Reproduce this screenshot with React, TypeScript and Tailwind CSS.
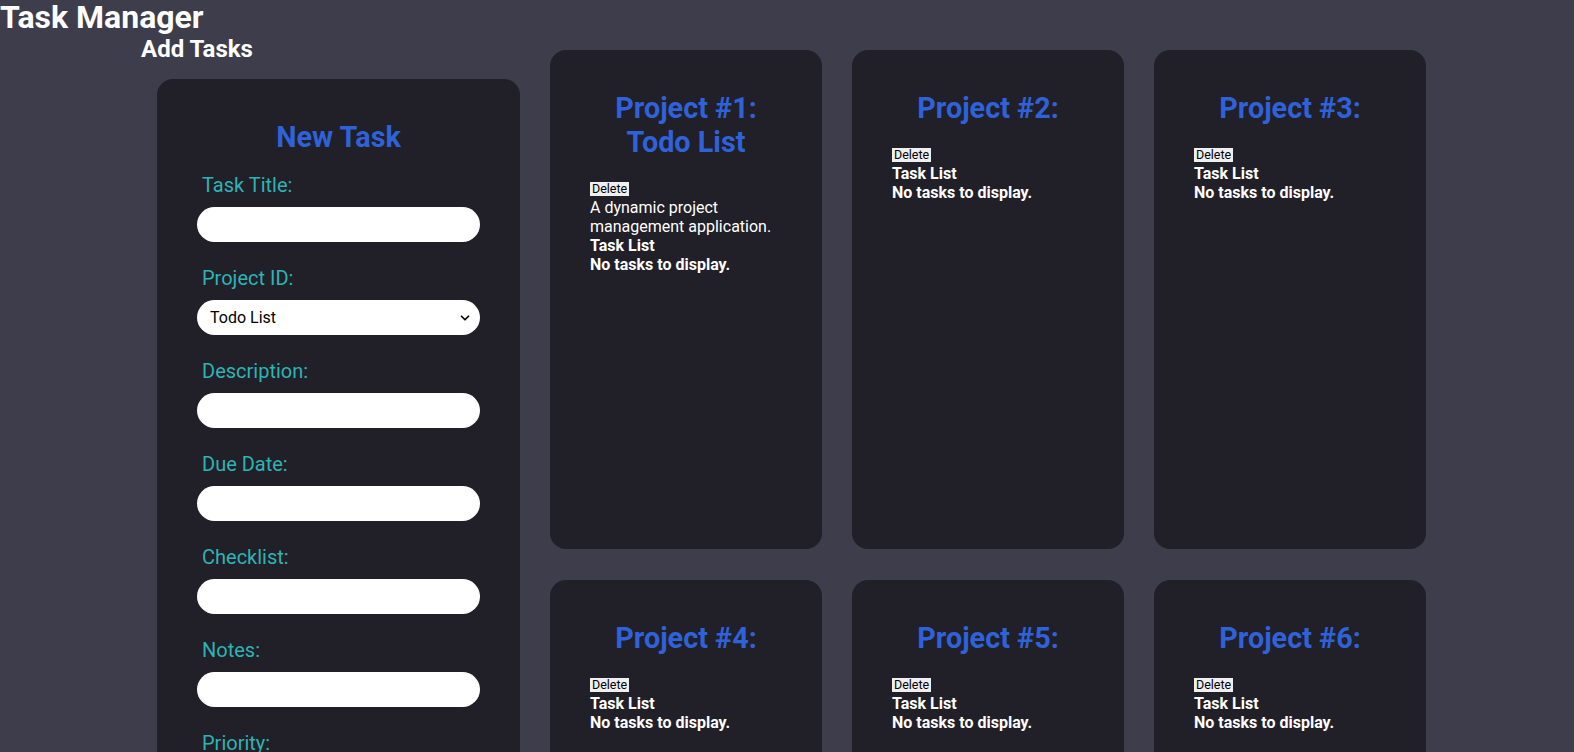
import { ChevronDown } from 'lucide-react'

const projects = [
  { id: 1, title: 'Todo List', description: 'A dynamic project management application.' },
  { id: 2, title: '', description: '' },
  { id: 3, title: '', description: '' },
  { id: 4, title: '', description: '' },
  { id: 5, title: '', description: '' },
  { id: 6, title: '', description: '' },
]

const fields = ['Task Title:', 'Project ID:', 'Description:', 'Due Date:', 'Checklist:', 'Notes:', 'Priority:']

function Field({ label }: { label: string }) {
  return (
    <div className="mb-[25px]">
      <label className="block pl-[5px] text-[20px] leading-[22px] text-[#2cb4b6]">{label}</label>
      {label === 'Project ID:' ? (
        <div className="relative mt-[11px] h-[35px] w-full rounded-full bg-white">
          <select className="h-full w-full appearance-none rounded-full bg-transparent pl-[13px] text-[16px] text-black outline-none">
            <option>Todo List</option>
          </select>
          <ChevronDown className="pointer-events-none absolute right-[8px] top-[11px] h-[14px] w-[14px] text-black" strokeWidth={3} />
        </div>
      ) : (
        <input className="mt-[11px] block h-[35px] w-full rounded-full bg-white px-3 text-black outline-none" />
      )}
    </div>
  )
}

function ProjectCard({ id, title, description }: { id: number; title: string; description: string }) {
  return (
    <div className="h-[499px] rounded-2xl bg-[#211f27] px-[40px] pt-[41px]">
      <h2 className="text-center text-[28.8px] font-bold leading-[34px] text-[#2f62d8]">
        Project #{id}:{title && <><br />{title}</>}
      </h2>
      <div className="mt-[23px] h-[16px]">
        <button className="mt-[1px] block h-[14px] bg-[#efefef] px-[2px] text-[12.5px] leading-[14px] text-black">Delete</button>
      </div>
      <div className="text-[16px] leading-[19px] text-white">
        {description && <p>{description}</p>}
        <p className="font-bold">Task List</p>
        <p className="font-bold">No tasks to display.</p>
      </div>
    </div>
  )
}

export default function App() {
  return (
    <div className="h-[752px] overflow-hidden bg-[#3e3d4b] font-['Roboto',sans-serif]">
      <h1 className="text-[32px] font-bold leading-[35px] text-white">Task Manager</h1>
      <div className="flex items-start">
        {/* Add tasks */}
        <div className="ml-[141px]">
          <h2 className="text-[24px] font-bold leading-[28px] text-white">Add Tasks</h2>
          <div className="ml-[16px] mt-[16px] w-[363px] rounded-2xl bg-[#211f27] px-[40px] pb-10 pt-[41px]">
            <h2 className="mb-[20px] text-center text-[28.8px] font-bold leading-[34px] text-[#2f62d8]">New Task</h2>
            {fields.map((f) => (
              <Field key={f} label={f} />
            ))}
          </div>
        </div>

        {/* Projects */}
        <div className="ml-[30px] mt-[15px] grid grid-cols-[272px_272px_272px] gap-x-[30px] gap-y-[31px]">
          {projects.map((p) => (
            <ProjectCard key={p.id} {...p} />
          ))}
        </div>
      </div>
    </div>
  )
}
